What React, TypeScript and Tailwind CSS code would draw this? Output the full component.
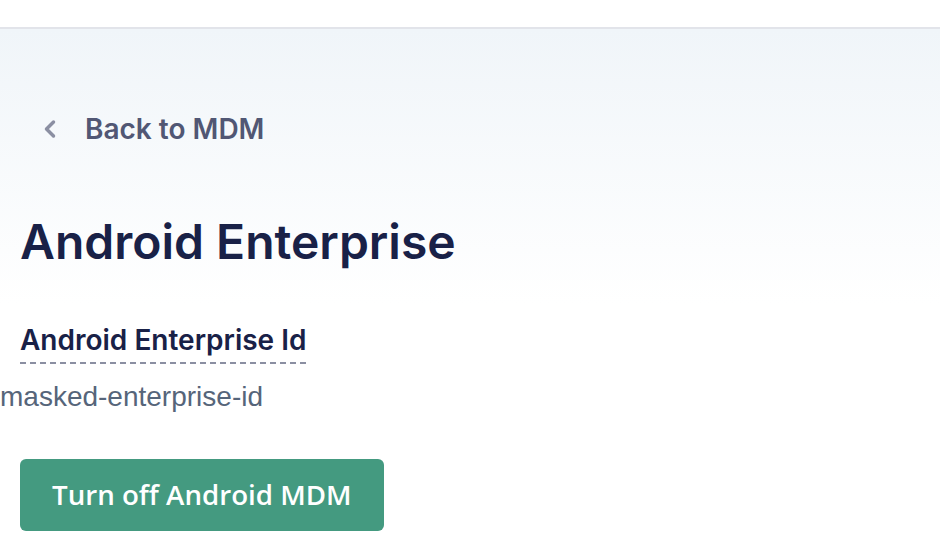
import { ChevronLeft } from 'lucide-react';

export default function App() {
  return (
    <div className="min-h-[535px] bg-white font-['Inter',sans-serif]">
      {/* top bar */}
      <div className="h-[29px] border-b-2 border-[#e2e4ea] bg-white" />

      <main className="bg-gradient-to-b from-[#f0f5f9] to-white to-[275px] px-5 pt-[86px]">
        <a href="#" className="flex items-center gap-[21px] pl-4 text-[28px] font-semibold leading-none text-[#515774]">
          <ChevronLeft className="h-7 w-7 text-[#8b8fa2]" strokeWidth={3} />
          Back to MDM
        </a>

        <h1 className="mt-[75px] text-[48px] font-semibold leading-none text-[#192147]">
          Android Enterprise
        </h1>

        <div className="mt-[60px]">
          <span className="inline-block border-b-2 border-dashed border-[#8b8fa2] pb-[8px] text-[28px] font-semibold leading-none text-[#192147]">
            Android Enterprise Id
          </span>
        </div>
      </main>

      <p className="mt-[19px] font-['Liberation_Sans',Arial,sans-serif] text-[28px] leading-none text-[#56657a]">
        masked-enterprise-id
      </p>

      <div className="px-5 pt-[48px]">
        <button className="flex h-[72px] items-center rounded-md bg-[#449a80] px-[32px] font-['Open_Sans',sans-serif] text-[27.7px] font-semibold text-white">
          Turn off Android MDM
        </button>
      </div>
    </div>
  );
}
